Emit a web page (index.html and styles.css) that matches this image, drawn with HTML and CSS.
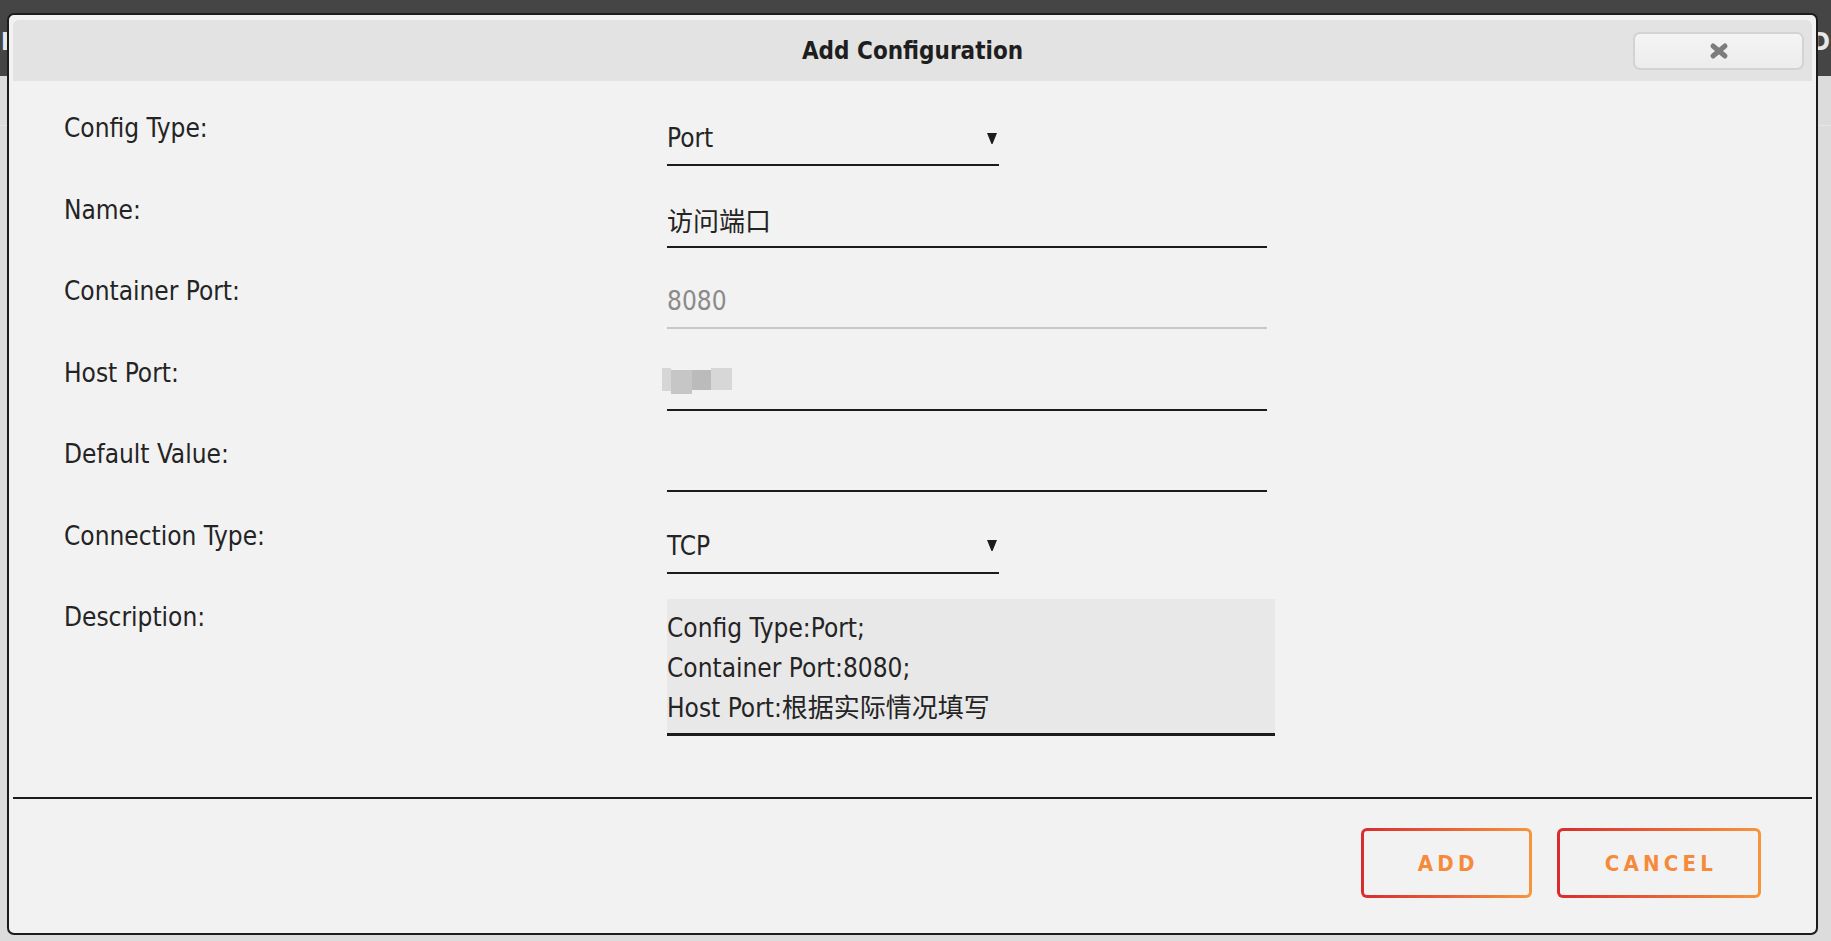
FILE: index.html
```html
<!DOCTYPE html>
<html lang="zh">
<head>
    <meta charset="UTF-8">
    <meta name="viewport" content="width=device-width, initial-scale=1.0">
    <title>Add Configuration</title>
    <link rel="stylesheet" href="styles.css">
</head>
<body>
    <div class="page">
        <div class="page-header">
            <span class="brand-left">H</span>
            <span class="brand-right">D</span>
        </div>
        <div class="page-content"></div>
    </div>

    <div class="modal">
        <div class="modal-header">
            <h2 class="modal-title">Add Configuration</h2>
            <button class="close-btn">
                <svg width="22" height="18" viewBox="0 0 22 18">
                    <path d="M5 4 L17 14 M17 4 L5 14" stroke="#7c7c7c" stroke-width="5" stroke-linecap="round" fill="none"/>
                </svg>
            </button>
        </div>

        <div class="modal-body">
            <div class="form-row">
                <label class="form-label">Config Type:</label>
                <div class="select">
                    <span>Port</span>
                    <svg class="caret" width="10" height="11" viewBox="0 0 10 11"><polygon points="0,0 10,0 5.5,11 4.5,11" fill="#1c1c1c"/></svg>
                </div>
            </div>
            <div class="form-row">
                <label class="form-label">Name:</label>
                <input class="field" type="text" value="访问端口">
            </div>
            <div class="form-row">
                <label class="form-label">Container Port:</label>
                <input class="field is-disabled" type="text" value="8080" disabled>
            </div>
            <div class="form-row">
                <label class="form-label">Host Port:</label>
                <div class="field">
                    <div class="mosaic">
                        <span class="m1"></span>
                        <span class="m2"></span>
                        <span class="m3"></span>
                        <span class="m4"></span>
                    </div>
                </div>
            </div>
            <div class="form-row">
                <label class="form-label">Default Value:</label>
                <input class="field" type="text" value="">
            </div>
            <div class="form-row">
                <label class="form-label">Connection Type:</label>
                <div class="select">
                    <span>TCP</span>
                    <svg class="caret" width="10" height="11" viewBox="0 0 10 11"><polygon points="0,0 10,0 5.5,11 4.5,11" fill="#1c1c1c"/></svg>
                </div>
            </div>
            <div class="form-row">
                <label class="form-label">Description:</label>
                <div class="desc">
                    <div>Config Type:Port;</div>
                    <div>Container Port:8080;</div>
                    <div>Host Port:根据实际情况填写</div>
                </div>
            </div>
        </div>

        <div class="modal-footer">
            <button class="btn">ADD</button>
            <button class="btn btn-wide">CANCEL</button>
        </div>
    </div>
</body>
</html>
```

FILE: styles.css
```css
:root {
    --page-bg: #dcdcdc;
    --header-bg: #454545;
    --modal-bg: #f2f2f2;
    --panel-bg: #e3e3e3;
    --text-color: #242424;
    --line-color: #1c1c1c;
    --muted: #8a8a8a;
    --orange: #f68a3b;
    --red: #d92b2f;
    --font: "DejaVu Sans Condensed", Roboto, "Noto Sans CJK SC", sans-serif;
}

* {
    box-sizing: border-box;
    margin: 0;
    padding: 0;
}

body {
    font-family: var(--font);
    background: var(--page-bg);
    color: var(--text-color);
    height: 100vh;
    overflow: hidden;
}

/* 背景页面 */
.page-header {
    height: 76px;
    background: var(--header-bg);
    display: flex;
    justify-content: space-between;
    align-items: center;
    padding: 8px 0 0;
}

.brand-left,
.brand-right {
    color: #e8e8e8;
    font-weight: bold;
    font-size: 24px;
}

.brand-left { margin-left: 1px; }
.brand-right { margin-right: 1px; }

.page-content {
    height: 50px;
    border-bottom: 1px solid #e6e6e6;
}

/* 弹窗 */
.modal {
    position: fixed;
    left: 7px;
    top: 13px;
    width: 1811px;
    background: var(--modal-bg);
    border: 2px solid var(--line-color);
    border-radius: 7px;
    padding: 5px 4px 0;
}

.modal-header {
    height: 61px;
    background: var(--panel-bg);
    border-radius: 6px 6px 0 0;
    display: grid;
    grid-template-columns: 1fr auto 1fr;
    align-items: center;
}

.modal-title {
    grid-column: 2;
    font-size: 24px;
    font-weight: bold;
    color: #1e1e1e;
}

.close-btn {
    grid-column: 3;
    justify-self: end;
    margin-right: 8px;
    width: 171px;
    height: 38px;
    border: 2px solid #d3d3d3;
    border-radius: 7px;
    background: linear-gradient(#f4f4f4, #ececec);
    display: flex;
    align-items: center;
    justify-content: center;
}

.close-btn svg { filter: blur(0.4px); }

/* 表单 */
.modal-body {
    padding: 32px 51px 61px;
    display: flex;
    flex-direction: column;
    gap: 28.5px;
}

.form-row {
    display: grid;
    grid-template-columns: 603px auto;
    align-items: start;
}

.form-label {
    font-size: 26px;
    line-height: 30px;
    color: var(--text-color);
}

.field,
.select {
    height: 53px;
    padding: 10px 0 11px;
    font-family: var(--font);
    font-size: 26px;
    line-height: 30px;
    color: var(--text-color);
    background: transparent;
    border: none;
    border-bottom: 2px solid var(--line-color);
    outline: none;
}

.field { width: 600px; }

.field.is-disabled {
    color: var(--muted);
    -webkit-text-fill-color: var(--muted);
    border-bottom-color: #c7c7c7;
}

.select {
    width: 332px;
    display: flex;
    justify-content: space-between;
    align-items: center;
    padding-right: 2px;
}

.mosaic {
    display: flex;
    align-items: flex-start;
    margin-left: -5px;
    filter: blur(0.5px);
}

.mosaic span { display: block; }
.m1 { width: 9px; height: 23px; background: #d6d6d6; }
.m2 { width: 21px; height: 24px; margin-top: 2px; background: #c6c6c6; }
.m3 { width: 19px; height: 20px; margin-top: 2px; background: #bbbbbb; }
.m4 { width: 21px; height: 22px; background: #d7d7d7; }

.desc {
    width: 608px;
    margin-top: -3px;
    padding: 9px 0 5px;
    background: #e8e8e8;
    border-bottom: 3px solid var(--line-color);
    font-size: 26px;
    line-height: 40px;
}

/* 底部按钮 */
.modal-footer {
    border-top: 2px solid var(--line-color);
    padding: 29px 51px 35px;
    display: flex;
    justify-content: flex-end;
    gap: 25px;
}

.btn {
    min-width: 171px;
    height: 70px;
    padding: 0 42px 0 46px;
    border: 3px solid transparent;
    border-radius: 6px;
    background:
        linear-gradient(var(--modal-bg), var(--modal-bg)) padding-box,
        linear-gradient(90deg, var(--red), #f7953c) border-box;
    color: var(--orange);
    font-family: var(--font);
    font-size: 22px;
    font-weight: bold;
    letter-spacing: 4.2px;
    cursor: pointer;
}

.btn-wide { padding: 0 41px 0 45px; }
```
